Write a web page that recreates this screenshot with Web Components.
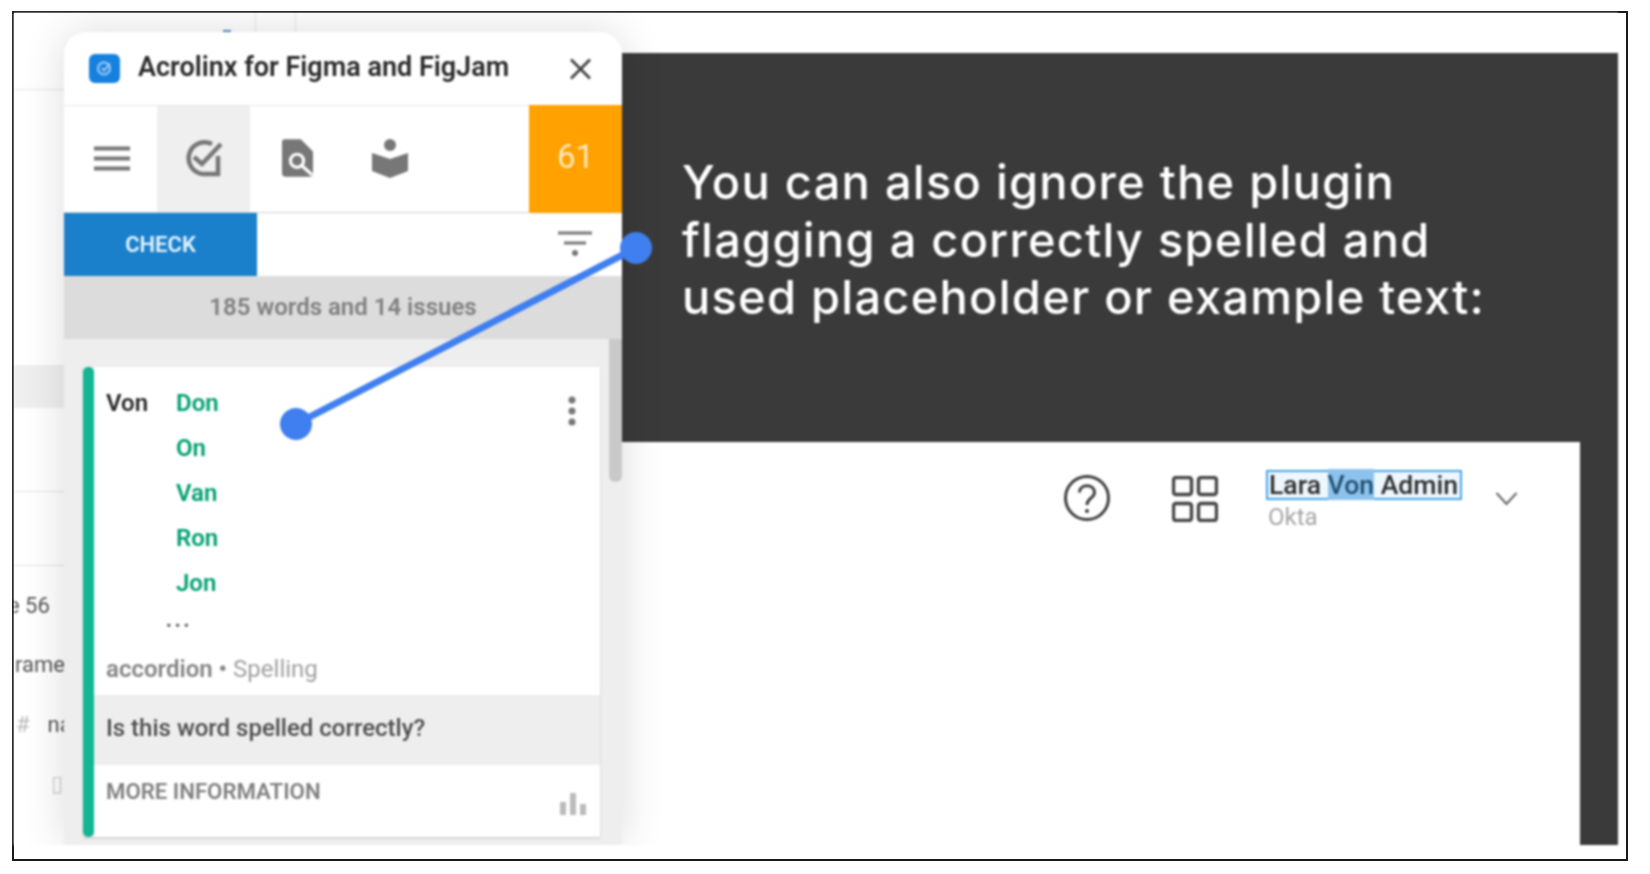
<!DOCTYPE html>
<html lang="en">
<head>
<meta charset="utf-8">
<title>Acrolinx guide slide</title>
<style>
  html, body { margin: 0; padding: 0; background: #fff; }
  body { font-family: Roboto, "Liberation Sans", sans-serif; }
</style>
</head>
<body>
<guide-frame>
  <canvas-strip></canvas-strip>
  <plugin-panel>
    <plugin-titlebar title-text="Acrolinx for Figma and FigJam"></plugin-titlebar>
    <plugin-tabs score="61"></plugin-tabs>
    <plugin-check-row></plugin-check-row>
    <plugin-status>185 words and 14 issues</plugin-status>
    <issue-list>
      <issue-card word="Von" suggestions="Don,On,Van,Ron,Jon"></issue-card>
    </issue-list>
  </plugin-panel>
  <callout-panel>
    You can also ignore the plugin<br>flagging a correctly spelled and<br>used placeholder or example text:
    <user-menu slot="sheet"></user-menu>
  </callout-panel>
  <guide-connector></guide-connector>
</guide-frame>

<script>
// Outer black frame, holds the picture with a white margin right and below
class GuideFrame extends HTMLElement {
  constructor() {
    super();
    this.attachShadow({ mode: "open" });
  }

  connectedCallback() {
    this.shadowRoot.innerHTML = `
      <style>
        :host {
          display: block;
          box-sizing: border-box;
          width: 1616px;
          height: 850px;
          margin: 11px 0 0 12px;
          padding: 0 8px 14px 0;
          border: 2px solid #1a1a1a;
          background: #fff;
        }
        .stage {
          position: relative;
          display: grid;
          grid-template-columns: 50px 558px 1fr;
          height: 100%;
          overflow: hidden;
          filter: blur(0.8px);
          /* faint figma rulers poking out above the plugin */
          background:
            linear-gradient(#e6e6e6, #e6e6e6) 241px 0 / 1px 20px no-repeat,
            linear-gradient(#e6e6e6, #e6e6e6) 281px 0 / 1px 20px no-repeat,
            linear-gradient(#4a90d9, #4a90d9) 209px 17px / 8px 2px no-repeat,
            #fff;
        }
      </style>
      <div class="stage"><slot></slot></div>
    `;
  }
}

// Scraps of the figma layers panel, cut off by the plugin window
class CanvasStrip extends HTMLElement {
  constructor() {
    super();
    this.attachShadow({ mode: "open" });
  }

  connectedCallback() {
    this.shadowRoot.innerHTML = `
      <style>
        :host {
          display: flex;
          flex-direction: column;
          overflow: hidden;
          font: 400 22px/1 Roboto, "Liberation Sans", sans-serif;
          color: #555;
          white-space: nowrap;
        }
        .line { height: 1px; background: #e4e4e4; flex: none; }
        .band { height: 43px; background: #efefef; flex: none; }
        .row { flex: none; height: 24px; }
      </style>
      <div class="line" style="margin-top:76px"></div>
      <div class="band" style="margin-top:275px"></div>
      <div class="line" style="margin-top:83px"></div>
      <div class="line" style="margin-top:73px"></div>
      <div class="row" style="margin-top:29px;margin-left:-6px">e 56</div>
      <div class="row" style="margin-top:35px;margin-left:1px">rame</div>
      <div class="row" style="margin-top:36px;padding-left:2px;color:#bbb">#<span style="color:#555;margin-left:18px">na</span></div>
      <div class="row" style="margin-top:35px;padding-left:37px;color:#ccc">&#9647;</div>
    `;
  }
}

// White plugin window, floats over the slide with a soft shadow
class PluginPanel extends HTMLElement {
  constructor() {
    super();
    this.attachShadow({ mode: "open" });
  }

  connectedCallback() {
    this.shadowRoot.innerHTML = `
      <style>
        :host {
          display: flex;
          flex-direction: column;
          position: relative;
          z-index: 2;
          margin-top: 19px;
          min-height: 0;
          background: #fff;
          border-radius: 22px 22px 0 0;
          box-shadow: 0 0 44px rgba(0, 0, 0, 0.14);
          font-family: Roboto, "Liberation Sans", sans-serif;
        }
      </style>
      <slot></slot>
    `;
  }
}

class PluginTitlebar extends HTMLElement {
  constructor() {
    super();
    this.attachShadow({ mode: "open" });
  }

  connectedCallback() {
    const title = this.getAttribute("title-text");
    this.shadowRoot.innerHTML = `
      <style>
        :host {
          display: flex;
          align-items: center;
          flex: none;
          height: 73px;
          padding: 0 30px 0 25px;
          font-size: 27px;
          font-weight: 600;
          color: #2a2a2a;
        }
        .title { margin: -3px 0 0 18px; flex: 1; white-space: nowrap; }
        svg { display: block; flex: none; }
      </style>
      <svg width="31" height="29" viewBox="0 0 31 29">
        <rect width="31" height="29" rx="6" fill="#1580de"/>
        <circle cx="15" cy="14.500" r="6" fill="none" stroke="#8cc4f2" stroke-width="2.400"/>
        <path d="M13 14l2 2.500 6-7" fill="none" stroke="#a9d3f5" stroke-width="1.800"/>
      </svg>
      <span class="title">${title}</span>
      <svg width="23" height="22" viewBox="0 0 23 22">
        <path d="M2 1.500L21 20.500M21 1.500L2 20.500" stroke="#444" stroke-width="2.800" fill="none"/>
      </svg>
    `;
  }
}

// Row of sidebar tabs plus the orange score tile
class PluginTabs extends HTMLElement {
  constructor() {
    super();
    this.attachShadow({ mode: "open" });
  }

  connectedCallback() {
    this.shadowRoot.innerHTML = `
      <style>
        :host {
          display: flex;
          flex: none;
          height: 108px;
          box-sizing: border-box;
          border-top: 1px solid #e6e6e6;
          border-bottom: 1px solid #cfcfcf;
        }
        .tab {
          display: flex;
          align-items: center;
          justify-content: center;
          width: 93px;
          padding-bottom: 2px;
        }
        .tab.active { background: #efefef; }
        .score {
          margin-left: auto;
          width: 93px;
          margin-top: -1px;
          margin-bottom: -1px;
          display: flex;
          align-items: center;
          justify-content: center;
          padding-bottom: 6px;
          box-sizing: border-box;
          background: #ffa100;
          color: #ffe8c0;
          font-size: 33px;
        }
        .doc, .book { width: 46px; justify-content: center; }
        svg { display: block; }
      </style>
      <div class="tab">
        <svg width="36" height="25" viewBox="0 0 36 25" style="margin-left:2px">
          <path d="M0 2.500H36M0 12.500H36M0 22.500H36" stroke="#777" stroke-width="4"/>
        </svg>
      </div>
      <div class="tab active">
        <svg width="40" height="38" viewBox="0 0 40 38" fill="none" stroke="#777" stroke-width="4.500">
          <path d="M28 5A16 16 0 1 0 18 35H34V17"/>
          <path d="M10 18L18 25L37 5"/>
        </svg>
      </div>
      <div class="tab doc" style="margin-left:24px">
        <svg width="31" height="38" viewBox="0 0 33 40">
          <path d="M3 0H20L33 13V36Q33 40 29 40H4Q0 40 0 36V3Q0 0 3 0Z" fill="#777"/>
          <circle cx="16" cy="23" r="7" fill="#777" stroke="#fff" stroke-width="3.400"/>
          <path d="M21 28L32 38" stroke="#fff" stroke-width="3.400"/>
        </svg>
      </div>
      <div class="tab book" style="margin-left:47px">
        <svg width="36" height="39" viewBox="0 0 36 39">
          <circle cx="18" cy="6" r="6" fill="#777"/>
          <path d="M0 14L18 20L36 14V32L18 39L0 32Z" fill="#777"/>
        </svg>
      </div>
      <div class="score">${this.getAttribute("score")}</div>
    `;
  }
}

class PluginCheckRow extends HTMLElement {
  constructor() {
    super();
    this.attachShadow({ mode: "open" });
  }

  connectedCallback() {
    this.shadowRoot.innerHTML = `
      <style>
        :host {
          display: flex;
          align-items: stretch;
          flex: none;
          height: 63px;
        }
        .check {
          display: flex;
          align-items: center;
          justify-content: center;
          width: 193px;
          background: #1a80cc;
          color: #e6f3fc;
          font-size: 22px;
          font-weight: 600;
        }
        .filter { margin: 18px 30px 0 auto; display: block; }
      </style>
      <div class="check">CHECK</div>
      <svg class="filter" width="34" height="26" viewBox="0 0 34 26">
        <path d="M0 2H34M6 12H28" stroke="#777" stroke-width="3"/>
        <circle cx="17" cy="22" r="3" fill="#777"/>
      </svg>
    `;
  }
}

class PluginStatus extends HTMLElement {
  constructor() {
    super();
    this.attachShadow({ mode: "open" });
  }

  connectedCallback() {
    this.shadowRoot.innerHTML = `
      <style>
        :host {
          display: flex;
          align-items: center;
          justify-content: center;
          flex: none;
          height: 63px;
          padding-bottom: 2px;
          box-sizing: border-box;
          background: #dcdcdc;
          color: #808080;
          font-size: 24px;
          font-weight: 600;
        }
      </style>
      <slot></slot>
    `;
  }
}

// Scrolling list area, the scrollbar thumb sits on top of it
class IssueList extends HTMLElement {
  constructor() {
    super();
    this.attachShadow({ mode: "open" });
  }

  connectedCallback() {
    this.shadowRoot.innerHTML = `
      <style>
        :host {
          display: block;
          position: relative;
          flex: 1;
          min-height: 0;
          overflow: hidden;
          box-sizing: border-box;
          padding: 28px 22px 0 19px;
          background: #eee;
        }
        .thumb {
          position: absolute;
          top: 0;
          right: 0;
          width: 13px;
          height: 143px;
          border-radius: 0 0 6px 6px;
          background: #c9c9c9;
        }
      </style>
      <slot></slot>
      <div class="thumb"></div>
    `;
  }
}

class IssueCard extends HTMLElement {
  constructor() {
    super();
    this.attachShadow({ mode: "open" });
  }

  connectedCallback() {
    const suggestions = this.getAttribute("suggestions").split(",");
    const items = suggestions.map((word) => `<div class="fix">${word}</div>`).join("");
    this.shadowRoot.innerHTML = `
      <style>
        :host {
          display: flex;
          height: 470px;
          box-shadow: 0 1px 2px rgba(0, 0, 0, 0.18);
          font-size: 24px;
        }
        .bar { width: 11px; flex: none; border-radius: 5px; background: #14b593; }
        .body { flex: 1; display: flex; flex-direction: column; min-width: 0; }
        .top {
          position: relative;
          height: 328px;
          box-sizing: border-box;
          padding: 14px 12px 0;
          background: #fff;
        }
        .words { display: grid; grid-template-columns: 70px 1fr; line-height: 45px; font-weight: 600; }
        .word { color: #2a2a2a; }
        .fix { color: #00a070; }
        .more-dots {
          margin: 6px 0 0 60px;
          height: 26px;
          line-height: 26px;
          font-size: 17px;
          letter-spacing: 3px;
          color: #666;
        }
        .meta { margin-top: 16px; line-height: 30px; font-weight: 600; color: #858585; }
        .meta span { font-weight: 400; color: #a0a0a0; }
        .kebab { position: absolute; top: 29px; right: 24px; display: block; }
        .question {
          display: flex;
          align-items: center;
          height: 70px;
          padding: 0 12px 4px;
          box-sizing: border-box;
          color: #4d4d4d;
          font-weight: 500;
          background: #eee;
        }
        .more {
          position: relative;
          flex: 1;
          padding: 11px 12px 0;
          background: #fff;
          color: #808080;
          font-size: 22.200px;
          font-weight: 600;
          line-height: 30px;
        }
        .chart { position: absolute; right: 14px; top: 28px; display: block; }
      </style>
      <div class="bar"></div>
      <div class="body">
        <div class="top">
          <div class="words">
            <div class="word">${this.getAttribute("word")}</div>
            <div>${items}</div>
          </div>
          <div class="more-dots">&bull;&bull;&bull;</div>
          <div class="meta">accordion &bull; <span>Spelling</span></div>
          <svg class="kebab" width="8" height="30" viewBox="0 0 8 30" fill="#777">
            <circle cx="4" cy="4" r="3.500"/><circle cx="4" cy="15" r="3.500"/><circle cx="4" cy="26" r="3.500"/>
          </svg>
        </div>
        <div class="question">Is this word spelled correctly?</div>
        <div class="more">MORE INFORMATION
          <svg class="chart" width="26" height="22" viewBox="0 0 26 22" fill="#bbb">
            <rect x="0" y="9" width="6" height="13"/><rect x="10" y="0" width="6" height="22"/><rect x="20" y="11" width="6" height="11"/>
          </svg>
        </div>
      </div>
    `;
  }
}

// Dark slide on the right: headline on top, white product sheet under it
class CalloutPanel extends HTMLElement {
  constructor() {
    super();
    this.attachShadow({ mode: "open" });
  }

  connectedCallback() {
    this.shadowRoot.innerHTML = `
      <style>
        :host {
          display: flex;
          flex-direction: column;
          margin-top: 40px;
          min-height: 0;
          background: #3a3a3a;
        }
        .headline {
          flex: none;
          height: 389px;
          box-sizing: border-box;
          padding: 100px 0 0 60px;
          color: #fff;
          font: 500 47px/57.5px Inter, "Liberation Sans", sans-serif;
          letter-spacing: 1.25px;
          white-space: nowrap;
        }
        .sheet {
          flex: 1;
          margin-right: 38px;
          background: #fff;
        }
      </style>
      <div class="headline"><slot></slot></div>
      <div class="sheet"><slot name="sheet"></slot></div>
    `;
  }
}

class UserMenu extends HTMLElement {
  constructor() {
    super();
    this.attachShadow({ mode: "open" });
  }

  connectedCallback() {
    this.shadowRoot.innerHTML = `
      <style>
        :host {
          display: flex;
          align-items: flex-start;
          justify-content: flex-end;
          padding: 28px 62px 0 0;
          font-family: Roboto, "Liberation Sans", sans-serif;
        }
        svg { display: block; flex: none; }
        .help { margin: 5px 62px 0 0; }
        .apps { margin: 6px 48px 0 0; }
        .who { width: 196px; }
        .name {
          box-sizing: border-box;
          height: 30px;
          padding-left: 1px;
          border: 2px solid #45a6ee;
          background: #eef7fe;
          color: #2e2e2e;
          font-size: 26.600px;
          font-weight: 500;
          line-height: 26px;
          white-space: nowrap;
        }
        .name mark { background: #8cc3ee; color: #24506f; }
        .org { margin: 4px 0 0 2px; color: #a5a5a5; font-size: 24px; line-height: 26px; }
        .chev { margin: 21px 0 0 33px; }
      </style>
      <svg class="help" width="46" height="46" viewBox="0 0 46 46" fill="none" stroke="#3d3d3d" stroke-width="3">
        <circle cx="23" cy="23" r="21.500"/>
        <path d="M15.500 17.500C15.500 8.500 30.500 8.500 30.500 17.500C30.500 23 23 23 23 30"/>
        <circle cx="23" cy="36" r="2" fill="#3d3d3d" stroke="none"/>
      </svg>
      <svg class="apps" width="46" height="46" viewBox="0 0 46 46" fill="none" stroke="#444" stroke-width="3.400">
        <rect x="1.500" y="1.500" width="18" height="17" rx="2.500"/><rect x="26.500" y="1.500" width="18" height="17" rx="2.500"/>
        <rect x="1.500" y="27.500" width="18" height="17" rx="2.500"/><rect x="26.500" y="27.500" width="18" height="17" rx="2.500"/>
      </svg>
      <div class="who">
        <div class="name">Lara <mark>Von</mark> Admin</div>
        <div class="org">Okta</div>
      </div>
      <svg class="chev" width="23" height="15" viewBox="0 0 23 15" fill="none" stroke="#666" stroke-width="2">
        <path d="M1.500 2L11.500 13L21.500 2"/>
      </svg>
    `;
  }
}

// Blue annotation line between the headline and the flagged word
class GuideConnector extends HTMLElement {
  constructor() {
    super();
    this.attachShadow({ mode: "open" });
  }

  connectedCallback() {
    this.shadowRoot.innerHTML = `
      <style>
        :host {
          position: absolute;
          inset: 0;
          z-index: 5;
          pointer-events: none;
        }
        svg { display: block; width: 100%; height: 100%; }
      </style>
      <svg viewBox="0 0 1604 832">
        <path d="M622 235L282 411" stroke="#3f7ff0" stroke-width="7"/>
        <circle cx="622" cy="235" r="16" fill="#3f7ff0"/>
        <circle cx="282" cy="411" r="16" fill="#3f7ff0"/>
      </svg>
    `;
  }
}

customElements.define("guide-frame", GuideFrame);
customElements.define("canvas-strip", CanvasStrip);
customElements.define("plugin-panel", PluginPanel);
customElements.define("plugin-titlebar", PluginTitlebar);
customElements.define("plugin-tabs", PluginTabs);
customElements.define("plugin-check-row", PluginCheckRow);
customElements.define("plugin-status", PluginStatus);
customElements.define("issue-list", IssueList);
customElements.define("issue-card", IssueCard);
customElements.define("callout-panel", CalloutPanel);
customElements.define("user-menu", UserMenu);
customElements.define("guide-connector", GuideConnector);
</script>
</body>
</html>
